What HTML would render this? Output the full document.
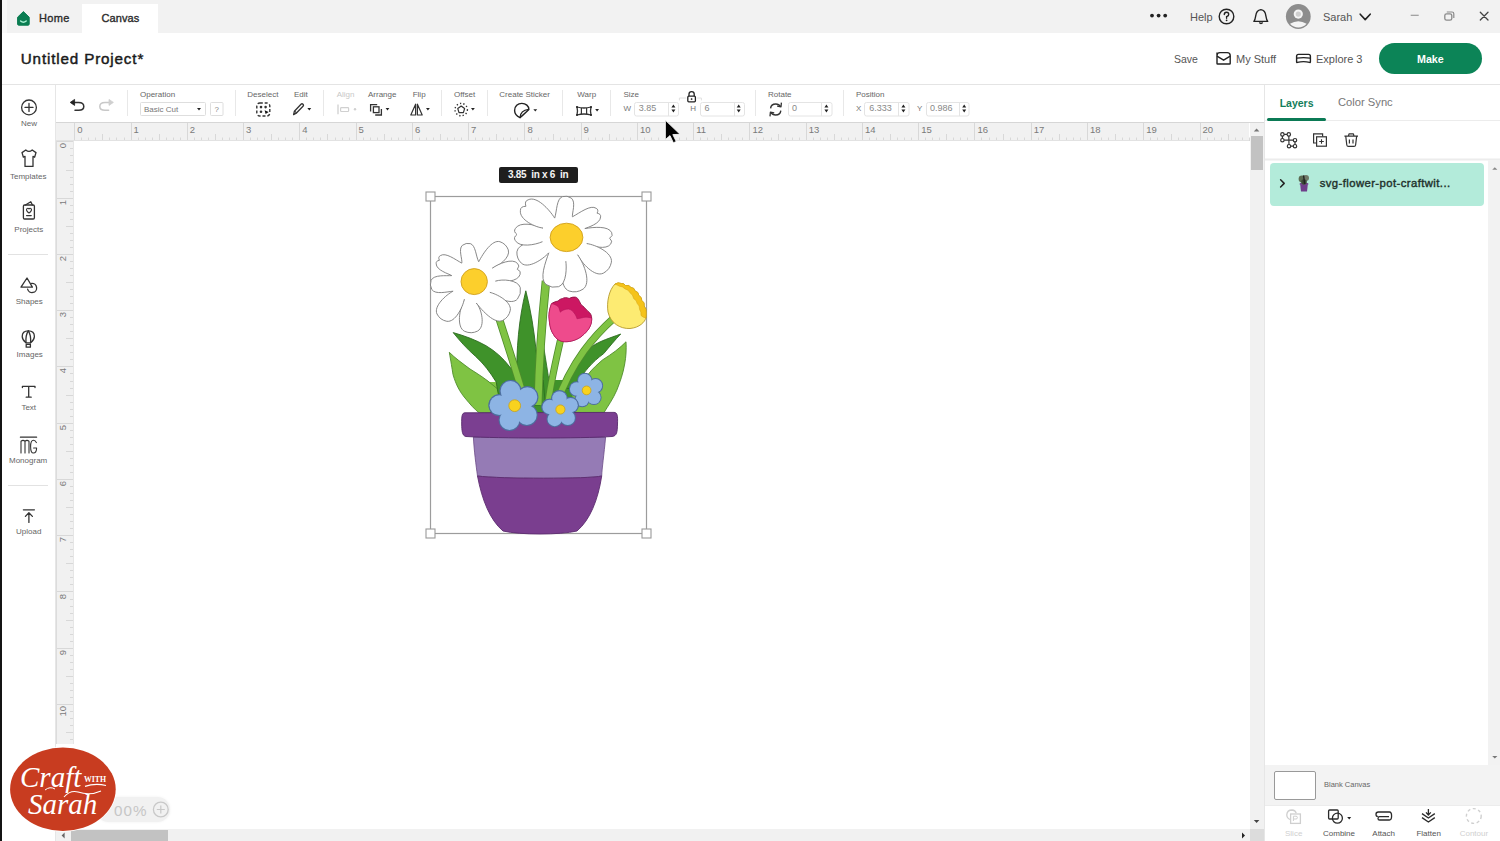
<!DOCTYPE html>
<html><head><meta charset="utf-8">
<style>
html,body{margin:0;padding:0}
body{width:1500px;height:841px;overflow:hidden;position:relative;background:#fff;font-family:"Liberation Sans",sans-serif;color:#333}
.a{position:absolute}
.t{position:absolute;white-space:nowrap;line-height:1}
.lbl{position:absolute;white-space:nowrap;line-height:1;font-size:8px;color:#666}
svg{position:absolute;overflow:visible}
</style></head><body>
<!-- top bar -->
<div class="a" style="left:0;top:0;width:1500px;height:33px;background:#f2f2f2"></div>
<div class="a" style="left:82px;top:4px;width:76px;height:29px;background:#fff"></div>
<!-- header -->
<div class="a" style="left:0;top:33px;width:1500px;height:51px;background:#fff"></div>
<div class="a" style="left:0;top:84px;width:1500px;height:1px;background:#e4e4e4"></div>
<div class="a" style="left:2px;top:0;width:5px;height:33px;background:#f9f9f9"></div>
<!-- left black edge -->
<div class="a" style="left:0;top:0;width:2px;height:841px;background:#141414"></div>

<!-- home icon -->
<svg style="left:0;top:0" width="40" height="33"><path d="M17.6 17.2 L23.4 11.6 L29.2 17.2 L29.2 24 Q29.2 25.2 28 25.2 L18.8 25.2 Q17.6 25.2 17.6 24 Z" fill="#0b7d52" stroke="#0b7d52" stroke-width="1" stroke-linejoin="round"/><path d="M20.6 21 Q23.4 23.4 26.2 21" fill="none" stroke="#a8f0d2" stroke-width="1.5" stroke-linecap="round"/></svg>
<div class="t" style="left:39px;top:13px;font-size:11px;letter-spacing:0.35px;-webkit-text-stroke:0.35px #2b2b2b;color:#2b2b2b">Home</div>
<div class="t" style="left:101.5px;top:13px;font-size:11px;letter-spacing:0.1px;-webkit-text-stroke:0.35px #2b2b2b;color:#2b2b2b">Canvas</div>
<div class="t" style="left:20.8px;top:51.3px;font-size:15.2px;letter-spacing:0.85px;-webkit-text-stroke:0.45px #1a1a1a;color:#1a1a1a">Untitled Project*</div>

<!-- top right -->
<svg style="left:1140px;top:0" width="360" height="33">
 <circle cx="12" cy="15.6" r="1.9" fill="#222"/><circle cx="18.6" cy="15.6" r="1.9" fill="#222"/><circle cx="25.2" cy="15.6" r="1.9" fill="#222"/>
 <circle cx="86.5" cy="16.5" r="7.3" fill="none" stroke="#222" stroke-width="1.4"/>
 <path d="M84.3 14.6 Q84.3 12.3 86.5 12.3 Q88.7 12.3 88.7 14.4 Q88.7 15.8 86.6 16.6 L86.6 18.2" fill="none" stroke="#222" stroke-width="1.4" stroke-linecap="round"/>
 <circle cx="86.6" cy="20.3" r="0.9" fill="#222"/>
 <path d="M121 9.6 Q125.5 10.2 126 16 Q126.6 20 127.8 21.4 L114 21.4 Q115.2 20 115.8 16 Q116.4 10.2 121 9.6 Z" fill="none" stroke="#222" stroke-width="1.4" stroke-linejoin="round" transform="translate(-0.1,0)"/>
 <path d="M119.3 22.6 Q121 24.4 122.7 22.6" fill="none" stroke="#222" stroke-width="1.4"/>
 <circle cx="158.3" cy="16.5" r="12.4" fill="#8d8d8d"/>
 <circle cx="158.3" cy="14.1" r="4.6" fill="#f4f4f4"/>
 <circle cx="158.3" cy="14.1" r="2.6" fill="#cfcfcf"/>
 <path d="M150 23.8 Q158.3 18.8 166.6 23.8 Q163 27.6 158.3 27.6 Q153.6 27.6 150 23.8 Z" fill="#f4f4f4"/>
 <path d="M220.2 14.2 L225.2 19.6 L230.2 14.2" fill="none" stroke="#222" stroke-width="1.6" stroke-linejoin="round" stroke-linecap="round"/>
 <path d="M270.7 15.3 L278.7 15.3" stroke="#9a9a9a" stroke-width="1.2"/>
 <rect x="304.8" y="13.8" width="7" height="6.4" rx="1.8" fill="none" stroke="#8a8a8a" stroke-width="1.3"/>
 <path d="M306.8 12 L312 12 Q313.8 12 313.8 13.8 L313.8 18" fill="none" stroke="#8a8a8a" stroke-width="1.2"/>
 <path d="M340.3 12.3 L348 20 M348 12.3 L340.3 20" stroke="#444" stroke-width="1.3" stroke-linecap="round"/>
</svg>
<div class="t" style="left:1190px;top:12px;font-size:11px;color:#555">Help</div>
<div class="t" style="left:1323px;top:12px;font-size:11px;color:#555">Sarah</div>

<!-- header right -->
<div class="t" style="left:1174px;top:54px;font-size:10.5px;color:#555">Save</div>
<svg style="left:1210px;top:45px" width="110" height="27">
 <path d="M7 7.6 L7 18.4 Q7 19 7.6 19 L19.6 19 Q20.2 19 20.2 18.4 L20.2 10.6 Q20.2 7.6 17.2 7.6 L10 7.6 Q7 7.6 7 10.6" fill="none" stroke="#222" stroke-width="1.4"/>
 <path d="M7 11.2 L13.6 15.2 L20.2 11.2" fill="none" stroke="#222" stroke-width="1.4" stroke-linejoin="round"/>
 <path d="M86.6 11.2 Q86.6 9.4 88.4 9.4 L98.6 9.4 Q100.4 9.4 100.4 11.2 L100.4 16.8 Q100.4 17.6 99.6 17.4 Q93.5 15.8 87.4 17.4 Q86.6 17.6 86.6 16.8 Z" fill="none" stroke="#222" stroke-width="1.4" stroke-linejoin="round"/>
 <path d="M86.8 13.2 Q93.5 12 100.2 13.2" fill="none" stroke="#222" stroke-width="1.2"/>
</svg>
<div class="t" style="left:1236px;top:54px;font-size:11px;color:#555">My Stuff</div>
<div class="t" style="left:1316px;top:54px;font-size:11px;color:#555">Explore 3</div>
<div class="a" style="left:1379px;top:43px;width:103px;height:31px;border-radius:16px;background:#0c8457"></div>
<div class="t" style="left:1417px;top:54px;font-size:10.7px;font-weight:bold;color:#fff">Make</div>

<!-- toolbar labels -->
<div class="lbl" style="left:140px;top:90.8px">Operation</div>
<div class="lbl" style="left:247.3px;top:90.8px">Deselect</div>
<div class="lbl" style="left:294px;top:90.8px">Edit</div>
<div class="lbl" style="left:336.7px;top:90.8px;color:#c8c8c8">Align</div>
<div class="lbl" style="left:368px;top:90.8px">Arrange</div>
<div class="lbl" style="left:412.7px;top:90.8px">Flip</div>
<div class="lbl" style="left:454px;top:90.8px">Offset</div>
<div class="lbl" style="left:499.3px;top:90.8px">Create Sticker</div>
<div class="lbl" style="left:577.3px;top:90.8px">Warp</div>
<div class="lbl" style="left:623.5px;top:90.8px">Size</div>
<div class="lbl" style="left:768px;top:90.8px">Rotate</div>
<div class="lbl" style="left:856px;top:90.8px">Position</div>

<svg style="left:0;top:85px" width="1000" height="37">
 <g stroke="#e8e8e8" stroke-width="1">
  <path d="M127.5 5V31M235.5 5V31M323.5 5V31M441.5 5V31M487.5 5V31M562.5 5V31M610.5 5V31M755.5 5V31M843.5 5V31"/>
 </g>
 <!-- undo -->
 <path d="M74 17.4 L78.6 17.4 Q83.8 17.4 83.8 21.4 Q83.8 25.2 78.6 25.2 L75 25.2" fill="none" stroke="#333" stroke-width="1.5" stroke-linecap="round"/>
 <path d="M70.2 17.4 L74.6 14.4 L74.6 20.4 Z" fill="#222" stroke="#222" stroke-width="0.8" stroke-linejoin="round"/>
 <!-- redo grey -->
 <path d="M109.6 17.4 L105 17.4 Q99.8 17.4 99.8 21.4 Q99.8 25.2 105 25.2 L108.6 25.2" fill="none" stroke="#c8c8c8" stroke-width="1.5" stroke-linecap="round"/>
 <path d="M113.4 17.4 L109 14.4 L109 20.4 Z" fill="#cfcfcf" stroke="#cfcfcf" stroke-width="0.8" stroke-linejoin="round"/>
 <!-- operation dropdown -->
 <rect x="140.5" y="17.5" width="65" height="13" rx="1" fill="#fff" stroke="#dedede"/>
 <path d="M197 23 L201 23 L199 25.4 Z" fill="#222"/>
 <rect x="210.5" y="17.5" width="12.5" height="13" rx="1" fill="#fff" stroke="#dedede"/>
 <!-- deselect -->
 <rect x="256.8" y="18" width="13" height="13" rx="3" fill="none" stroke="#333" stroke-width="1.4" stroke-dasharray="3 1.9"/>
 <circle cx="261" cy="22.1" r="1.3" fill="#333"/><circle cx="265.6" cy="22.1" r="1.3" fill="#333"/><circle cx="261" cy="26.8" r="1.3" fill="#333"/>
 <path d="M264.6 25.2 L268.6 27 L265.6 29 Z" fill="#111"/>
 <!-- edit pencil -->
 <path d="M293.6 29.6 L294.4 26.2 L301 19.2 Q302 18.2 303 19.2 Q304 20.2 303 21.2 L296.2 28.2 Z" fill="none" stroke="#333" stroke-width="1.3" stroke-linejoin="round"/>
 <path d="M294.6 26.2 L296.6 28" stroke="#333" stroke-width="1.1"/>
 <path d="M307.4 23 L311.2 23 L309.3 25.4 Z" fill="#222"/>
 <!-- align grey -->
 <path d="M338 19.4V29.3" stroke="#d0d0d0" stroke-width="1.3"/>
 <rect x="340.6" y="22.7" width="8" height="3.8" rx="0.8" fill="none" stroke="#d0d0d0" stroke-width="1.2"/>
 <circle cx="355" cy="24.2" r="1.2" fill="#d0d0d0"/>
 <!-- arrange -->
 <path d="M370.6 26.4 L370.6 19.6 L377.2 19.6" fill="none" stroke="#333" stroke-width="1.3"/>
 <rect x="373.4" y="21.8" width="5.6" height="5.8" fill="none" stroke="#333" stroke-width="1.3"/>
 <path d="M381.4 24 L381.4 30 L375.2 30" fill="none" stroke="#333" stroke-width="1.3"/>
 <path d="M385.6 23 L389.4 23 L387.5 25.4 Z" fill="#222"/>
 <!-- flip -->
 <path d="M415.6 19.2 L410.8 30 L415.6 30 Z M417.4 19.2 L422.2 30 L417.4 30 Z" fill="none" stroke="#333" stroke-width="1.2" stroke-linejoin="round"/>
 <path d="M426 23 L429.8 23 L427.9 25.4 Z" fill="#222"/>
 <!-- offset -->
 <circle cx="461.2" cy="24.6" r="6.2" fill="none" stroke="#333" stroke-width="1.4" stroke-dasharray="1.3 2.1"/>
 <path d="M461.2 21 L464.6 23.6 L463.4 27.6 L459 27.6 L457.8 23.6 Z" fill="none" stroke="#333" stroke-width="1.2" stroke-linejoin="round"/>
 <path d="M471 23 L474.8 23 L472.9 25.4 Z" fill="#222"/>
 <!-- sticker -->
 <path d="M520 32.7 C516 30.5 514.6 28 514.6 25.4 C514.6 21.3 517.8 18.4 521.8 18.4 C525.8 18.4 528.9 21 528.9 24.6 C526 27.5 523 30 520 32.7 Z" fill="none" stroke="#222" stroke-width="1.4" stroke-linejoin="round"/>
 <path d="M520 32.7 C520.3 28.4 522.6 25 528.6 24.4" fill="none" stroke="#222" stroke-width="1.3"/>
 <path d="M533.4 24.2 L537.2 24.2 L535.3 26.6 Z" fill="#222"/>
 <!-- warp -->
 <path d="M577 22 Q584 24 591 22 Q590 26 591 30 Q584 28 577 30 Q578 26 577 22 Z" fill="none" stroke="#333" stroke-width="1.3" stroke-linejoin="round"/>
 <path d="M581.4 23V29M586.6 23V29" stroke="#333" stroke-width="1.2"/>
 <circle cx="577" cy="22" r="1" fill="#222"/><circle cx="591" cy="22" r="1" fill="#222"/><circle cx="577" cy="30" r="1" fill="#222"/><circle cx="591" cy="30" r="1" fill="#222"/>
 <path d="M595.2 24 L599 24 L597.1 26.4 Z" fill="#222"/>
 <!-- size W -->
 <rect x="634.5" y="17.5" width="44" height="13.5" rx="2" fill="#fff" stroke="#e4e4e4"/>
 <path d="M668.5 18V31" stroke="#e4e4e4"/>
 <path d="M671.4 22.4 L673.4 19.6 L675.4 22.4 Z M671.4 24.6 L673.4 27.4 L675.4 24.6 Z" fill="#222"/>
 <!-- lock -->
 <path d="M679.4 15.4 L679.4 13 L686.2 13 M697.2 13 L701.4 13 L701.4 15.4" fill="none" stroke="#e0e0e0" stroke-width="1"/>
 <path d="M689 11.2 L689 9 Q689 6.6 691.6 6.6 Q694.2 6.6 694.2 9 L694.2 11.2" fill="none" stroke="#222" stroke-width="1.3"/>
 <rect x="687.8" y="11.2" width="7.6" height="5.6" rx="1" fill="#fff" stroke="#222" stroke-width="1.3"/>
 <path d="M691.6 13.2V15M690.7 14.1H692.5" stroke="#222" stroke-width="0.8"/>
 <!-- H -->
 <rect x="700.5" y="17.5" width="44" height="13.5" rx="2" fill="#fff" stroke="#e4e4e4"/>
 <path d="M734.5 18V31" stroke="#e4e4e4"/>
 <path d="M736.7 22.4 L738.7 19.6 L740.7 22.4 Z M736.7 24.6 L738.7 27.4 L740.7 24.6 Z" fill="#222"/>
 <!-- rotate -->
 <path d="M780.6 21.6 Q779 19 775.8 19 Q771 19 770.6 23.4" fill="none" stroke="#333" stroke-width="1.4"/>
 <path d="M781.4 17.6 L781 21.8 L777.2 21" fill="none" stroke="#333" stroke-width="1.3" stroke-linejoin="round"/>
 <path d="M770.8 27.4 Q772.4 30 775.6 30 Q780.4 30 780.8 25.6" fill="none" stroke="#333" stroke-width="1.4"/>
 <path d="M770 31.4 L770.4 27.2 L774.2 28" fill="none" stroke="#333" stroke-width="1.3" stroke-linejoin="round"/>
 <rect x="788.5" y="17.5" width="43.5" height="13.5" rx="2" fill="#fff" stroke="#e4e4e4"/>
 <path d="M821.5 18V31" stroke="#e4e4e4"/>
 <path d="M824.4 22.4 L826.4 19.6 L828.4 22.4 Z M824.4 24.6 L826.4 27.4 L828.4 24.6 Z" fill="#222"/>
 <!-- X Y -->
 <rect x="864.5" y="17.5" width="44.5" height="13.5" rx="2" fill="#fff" stroke="#e4e4e4"/>
 <path d="M898.5 18V31" stroke="#e4e4e4"/>
 <path d="M901.4 22.4 L903.4 19.6 L905.4 22.4 Z M901.4 24.6 L903.4 27.4 L905.4 24.6 Z" fill="#222"/>
 <rect x="926.5" y="17.5" width="42.5" height="13.5" rx="2" fill="#fff" stroke="#e4e4e4"/>
 <path d="M959.5 18V31" stroke="#e4e4e4"/>
 <path d="M962.2 22.4 L964.2 19.6 L966.2 22.4 Z M962.2 24.6 L964.2 27.4 L966.2 24.6 Z" fill="#222"/>
</svg>
<div class="t" style="left:144px;top:106px;font-size:8px;color:#777">Basic Cut</div>
<div class="t" style="left:214.5px;top:106px;font-size:8px;color:#888">?</div>
<div class="t" style="left:623.4px;top:105.2px;font-size:8px;color:#777">W</div>
<div class="t" style="left:638.8px;top:104.3px;font-size:9px;color:#888">3.85</div>
<div class="t" style="left:690.2px;top:105.2px;font-size:8px;color:#777">H</div>
<div class="t" style="left:704.6px;top:104.3px;font-size:9px;color:#888">6</div>
<div class="t" style="left:792px;top:104.3px;font-size:9px;color:#888">0</div>
<div class="t" style="left:856px;top:105.2px;font-size:8px;color:#777">X</div>
<div class="t" style="left:869.3px;top:104.3px;font-size:9px;color:#888">6.333</div>
<div class="t" style="left:917px;top:105.2px;font-size:8px;color:#777">Y</div>
<div class="t" style="left:930px;top:104.3px;font-size:9px;color:#888">0.986</div>

<div class="a" style="left:56px;top:122px;width:1193px;height:19px;background:#f1f1f1"></div>
<div class="a" style="left:56px;top:122px;width:1209px;height:1px;background:#d6d6d6"></div>
<svg style="left:0;top:0" width="1250" height="145"><path d="M74.5 123V141 M81.5 137.5V141 M88.5 137.5V141 M95.5 137.5V141 M102.5 134V141 M109.5 137.5V141 M116.5 137.5V141 M124.5 137.5V141 M131.5 123V141 M138.5 137.5V141 M145.5 137.5V141 M152.5 137.5V141 M159.5 134V141 M166.5 137.5V141 M173.5 137.5V141 M180.5 137.5V141 M187.5 123V141 M194.5 137.5V141 M201.5 137.5V141 M208.5 137.5V141 M215.5 134V141 M222.5 137.5V141 M229.5 137.5V141 M236.5 137.5V141 M243.5 123V141 M250.5 137.5V141 M257.5 137.5V141 M264.5 137.5V141 M271.5 134V141 M278.5 137.5V141 M285.5 137.5V141 M292.5 137.5V141 M299.5 123V141 M306.5 137.5V141 M313.5 137.5V141 M320.5 137.5V141 M327.5 134V141 M335.5 137.5V141 M342.5 137.5V141 M349.5 137.5V141 M356.5 123V141 M363.5 137.5V141 M370.5 137.5V141 M377.5 137.5V141 M384.5 134V141 M391.5 137.5V141 M398.5 137.5V141 M405.5 137.5V141 M412.5 123V141 M419.5 137.5V141 M426.5 137.5V141 M433.5 137.5V141 M440.5 134V141 M447.5 137.5V141 M454.5 137.5V141 M461.5 137.5V141 M468.5 123V141 M475.5 137.5V141 M482.5 137.5V141 M489.5 137.5V141 M496.5 134V141 M503.5 137.5V141 M510.5 137.5V141 M517.5 137.5V141 M524.5 123V141 M531.5 137.5V141 M538.5 137.5V141 M545.5 137.5V141 M553.5 134V141 M560.5 137.5V141 M567.5 137.5V141 M574.5 137.5V141 M581.5 123V141 M588.5 137.5V141 M595.5 137.5V141 M602.5 137.5V141 M609.5 134V141 M616.5 137.5V141 M623.5 137.5V141 M630.5 137.5V141 M637.5 123V141 M644.5 137.5V141 M651.5 137.5V141 M658.5 137.5V141 M665.5 134V141 M672.5 137.5V141 M679.5 137.5V141 M686.5 137.5V141 M693.5 123V141 M700.5 137.5V141 M707.5 137.5V141 M714.5 137.5V141 M721.5 134V141 M728.5 137.5V141 M735.5 137.5V141 M742.5 137.5V141 M749.5 123V141 M756.5 137.5V141 M763.5 137.5V141 M771.5 137.5V141 M778.5 134V141 M785.5 137.5V141 M792.5 137.5V141 M799.5 137.5V141 M806.5 123V141 M813.5 137.5V141 M820.5 137.5V141 M827.5 137.5V141 M834.5 134V141 M841.5 137.5V141 M848.5 137.5V141 M855.5 137.5V141 M862.5 123V141 M869.5 137.5V141 M876.5 137.5V141 M883.5 137.5V141 M890.5 134V141 M897.5 137.5V141 M904.5 137.5V141 M911.5 137.5V141 M918.5 123V141 M925.5 137.5V141 M932.5 137.5V141 M939.5 137.5V141 M946.5 134V141 M953.5 137.5V141 M960.5 137.5V141 M967.5 137.5V141 M974.5 123V141 M981.5 137.5V141 M989.5 137.5V141 M996.5 137.5V141 M1003.5 134V141 M1010.5 137.5V141 M1017.5 137.5V141 M1024.5 137.5V141 M1031.5 123V141 M1038.5 137.5V141 M1045.5 137.5V141 M1052.5 137.5V141 M1059.5 134V141 M1066.5 137.5V141 M1073.5 137.5V141 M1080.5 137.5V141 M1087.5 123V141 M1094.5 137.5V141 M1101.5 137.5V141 M1108.5 137.5V141 M1115.5 134V141 M1122.5 137.5V141 M1129.5 137.5V141 M1136.5 137.5V141 M1143.5 123V141 M1150.5 137.5V141 M1157.5 137.5V141 M1164.5 137.5V141 M1171.5 134V141 M1178.5 137.5V141 M1185.5 137.5V141 M1192.5 137.5V141 M1200.5 123V141 M1207.5 137.5V141 M1214.5 137.5V141 M1221.5 137.5V141 M1228.5 134V141 M1235.5 137.5V141 M1242.5 137.5V141 M1249.5 137.5V141" stroke="#d8d8d8" stroke-width="1" fill="none"/><path d="M56 140.5H1249" stroke="#e2e2e2" stroke-width="1"/></svg>
<div class="t" style="left:77.3px;top:125px;font-size:9.5px;color:#7a7a7a">0</div>
<div class="t" style="left:133.6px;top:125px;font-size:9.5px;color:#7a7a7a">1</div>
<div class="t" style="left:189.8px;top:125px;font-size:9.5px;color:#7a7a7a">2</div>
<div class="t" style="left:246.1px;top:125px;font-size:9.5px;color:#7a7a7a">3</div>
<div class="t" style="left:302.3px;top:125px;font-size:9.5px;color:#7a7a7a">4</div>
<div class="t" style="left:358.6px;top:125px;font-size:9.5px;color:#7a7a7a">5</div>
<div class="t" style="left:414.9px;top:125px;font-size:9.5px;color:#7a7a7a">6</div>
<div class="t" style="left:471.1px;top:125px;font-size:9.5px;color:#7a7a7a">7</div>
<div class="t" style="left:527.4px;top:125px;font-size:9.5px;color:#7a7a7a">8</div>
<div class="t" style="left:583.6px;top:125px;font-size:9.5px;color:#7a7a7a">9</div>
<div class="t" style="left:639.9px;top:125px;font-size:9.5px;color:#7a7a7a">10</div>
<div class="t" style="left:696.2px;top:125px;font-size:9.5px;color:#7a7a7a">11</div>
<div class="t" style="left:752.4px;top:125px;font-size:9.5px;color:#7a7a7a">12</div>
<div class="t" style="left:808.7px;top:125px;font-size:9.5px;color:#7a7a7a">13</div>
<div class="t" style="left:864.9px;top:125px;font-size:9.5px;color:#7a7a7a">14</div>
<div class="t" style="left:921.2px;top:125px;font-size:9.5px;color:#7a7a7a">15</div>
<div class="t" style="left:977.5px;top:125px;font-size:9.5px;color:#7a7a7a">16</div>
<div class="t" style="left:1033.7px;top:125px;font-size:9.5px;color:#7a7a7a">17</div>
<div class="t" style="left:1090.0px;top:125px;font-size:9.5px;color:#7a7a7a">18</div>
<div class="t" style="left:1146.2px;top:125px;font-size:9.5px;color:#7a7a7a">19</div>
<div class="t" style="left:1202.5px;top:125px;font-size:9.5px;color:#7a7a7a">20</div>
<div class="a" style="left:56px;top:141px;width:18px;height:603px;background:#f1f1f1"></div>
<svg style="left:0;top:0" width="80" height="745"><path d="M56 141.5H74 M70 148.5H74 M70 155.5H74 M70 162.5H74 M66 170.5H74 M70 177.5H74 M70 184.5H74 M70 191.5H74 M56 198.5H74 M70 205.5H74 M70 212.5H74 M70 219.5H74 M66 226.5H74 M70 233.5H74 M70 240.5H74 M70 247.5H74 M56 254.5H74 M70 261.5H74 M70 268.5H74 M70 275.5H74 M66 282.5H74 M70 289.5H74 M70 296.5H74 M70 303.5H74 M56 310.5H74 M70 317.5H74 M70 324.5H74 M70 331.5H74 M66 338.5H74 M70 345.5H74 M70 352.5H74 M70 359.5H74 M56 366.5H74 M70 373.5H74 M70 381.5H74 M70 388.5H74 M66 395.5H74 M70 402.5H74 M70 409.5H74 M70 416.5H74 M56 423.5H74 M70 430.5H74 M70 437.5H74 M70 444.5H74 M66 451.5H74 M70 458.5H74 M70 465.5H74 M70 472.5H74 M56 479.5H74 M70 486.5H74 M70 493.5H74 M70 500.5H74 M66 507.5H74 M70 514.5H74 M70 521.5H74 M70 528.5H74 M56 535.5H74 M70 542.5H74 M70 549.5H74 M70 556.5H74 M66 563.5H74 M70 570.5H74 M70 577.5H74 M70 584.5H74 M56 591.5H74 M70 599.5H74 M70 606.5H74 M70 613.5H74 M66 620.5H74 M70 627.5H74 M70 634.5H74 M70 641.5H74 M56 648.5H74 M70 655.5H74 M70 662.5H74 M70 669.5H74 M66 676.5H74 M70 683.5H74 M70 690.5H74 M70 697.5H74 M56 704.5H74 M70 711.5H74 M70 718.5H74 M70 725.5H74 M66 732.5H74 M70 739.5H74" stroke="#d8d8d8" stroke-width="1" fill="none"/><path d="M56.5 141V744" stroke="#dcdcdc" stroke-width="1"/><path d="M73.5 141V744" stroke="#e6e6e6" stroke-width="1"/></svg>
<div class="t" style="left:57.5px;top:143.4px;font-size:9.5px;color:#7a7a7a;transform-origin:0 0;transform:translate(0px,5.3px) rotate(-90deg)">0</div>
<div class="t" style="left:57.5px;top:199.7px;font-size:9.5px;color:#7a7a7a;transform-origin:0 0;transform:translate(0px,5.3px) rotate(-90deg)">1</div>
<div class="t" style="left:57.5px;top:255.9px;font-size:9.5px;color:#7a7a7a;transform-origin:0 0;transform:translate(0px,5.3px) rotate(-90deg)">2</div>
<div class="t" style="left:57.5px;top:312.2px;font-size:9.5px;color:#7a7a7a;transform-origin:0 0;transform:translate(0px,5.3px) rotate(-90deg)">3</div>
<div class="t" style="left:57.5px;top:368.4px;font-size:9.5px;color:#7a7a7a;transform-origin:0 0;transform:translate(0px,5.3px) rotate(-90deg)">4</div>
<div class="t" style="left:57.5px;top:424.7px;font-size:9.5px;color:#7a7a7a;transform-origin:0 0;transform:translate(0px,5.3px) rotate(-90deg)">5</div>
<div class="t" style="left:57.5px;top:481.0px;font-size:9.5px;color:#7a7a7a;transform-origin:0 0;transform:translate(0px,5.3px) rotate(-90deg)">6</div>
<div class="t" style="left:57.5px;top:537.2px;font-size:9.5px;color:#7a7a7a;transform-origin:0 0;transform:translate(0px,5.3px) rotate(-90deg)">7</div>
<div class="t" style="left:57.5px;top:593.5px;font-size:9.5px;color:#7a7a7a;transform-origin:0 0;transform:translate(0px,5.3px) rotate(-90deg)">8</div>
<div class="t" style="left:57.5px;top:649.7px;font-size:9.5px;color:#7a7a7a;transform-origin:0 0;transform:translate(0px,5.3px) rotate(-90deg)">9</div>
<div class="t" style="left:57.5px;top:706.0px;font-size:9.5px;color:#7a7a7a;transform-origin:0 0;transform:translate(0px,10.6px) rotate(-90deg)">10</div>
<!-- sidebar -->
<div class="a" style="left:55px;top:85px;width:1px;height:756px;background:#e6e6e6"></div>
<svg style="left:0;top:85px" width="56" height="460">
 <g fill="none" stroke="#333" stroke-width="1.3" stroke-linejoin="round" stroke-linecap="round">
  <!-- new -->
  <circle cx="29" cy="22.4" r="7.4"/>
  <path d="M29 18.4V26.4M25 22.4H33"/>
  <!-- templates shirt -->
  <path d="M25.8 65 L22 67.6 L23.4 72.2 L25 71.4 L25 81.4 L33 81.4 L33 71.4 L34.6 72.2 L36 67.6 L32.2 65 Q29 67.8 25.8 65 Z"/>
  <!-- projects -->
  <rect x="23.4" y="120" width="11" height="14" rx="1.2"/>
  <path d="M25.4 120 L30.8 116.8 L32.4 120"/>
  <path d="M26.6 130.6H31.2"/>
  <path d="M29 128 Q25.6 125.6 26.8 123.8 Q28 122.6 29 124 Q30 122.6 31.2 123.8 Q32.4 125.6 29 128 Z" stroke-width="1.1"/>
  <!-- shapes -->
  <path d="M27 193 L21 202.2 L32.4 202.2 Z"/>
  <path d="M27.6 204.2 A4.6 4.6 0 1 0 31.6 198.4"/>
  <!-- images balloon -->
  <path d="M28.3 245.8 Q34.4 245.8 34.4 251.4 Q34.4 254.6 30.6 257.8 L26 257.8 Q22.2 254.6 22.2 251.4 Q22.2 245.8 28.3 245.8 Z"/>
  <path d="M28.3 245.8 Q25.4 250 26 257.8 M28.3 245.8 Q31.2 250 30.6 257.8"/>
  <path d="M26.2 259.4 H30.4 V262.2 H26.2 Z"/>
  <!-- text T -->
  <path d="M22.4 302.6 V301.4 H35 V302.6 M28.7 301.4 V312.2 M26.2 312.2 H31.2"/>
  <!-- monogram -->
  <path d="M20.4 352.2 H36.6" stroke-width="1.2"/>
  <path d="M21 368 V356.2 Q23 354.6 25 356.2 V368 M25 356.2 Q27 354.6 29 356.2 V368" stroke-width="1.1"/>
  <path d="M36.4 357.6 Q35.4 355.2 33.4 355.2 Q30.6 355.2 30.6 361.4 Q30.6 368 33.4 368 Q36.6 368 36.6 363 H33.6" stroke-width="1.1"/>
  <!-- upload -->
  <path d="M23.4 424.8 H34.4 M28.9 437.4 V428 M25.4 431.4 L28.9 427.8 L32.4 431.4"/>
 </g>
 <path d="M8 169.5H48M8 400.5H48" stroke="#e2e2e2" stroke-width="1"/>
</svg>
<div class="t" style="left:21px;top:120.3px;font-size:8px;color:#666">New</div>
<div class="t" style="left:10px;top:172.6px;font-size:8px;color:#666">Templates</div>
<div class="t" style="left:14.3px;top:225.6px;font-size:8px;color:#666">Projects</div>
<div class="t" style="left:15.7px;top:297.6px;font-size:8px;color:#666">Shapes</div>
<div class="t" style="left:16.6px;top:351px;font-size:8px;color:#666">Images</div>
<div class="t" style="left:21.4px;top:403.8px;font-size:8px;color:#666">Text</div>
<div class="t" style="left:9px;top:457.4px;font-size:8px;color:#666">Monogram</div>
<div class="t" style="left:16px;top:528.3px;font-size:8px;color:#666">Upload</div>

<!-- canvas scrollbars -->
<div class="a" style="left:1250px;top:123px;width:14px;height:718px;background:#f1f1f1"></div>
<div class="a" style="left:1251px;top:136px;width:12px;height:34px;background:#c2c2c2"></div>
<svg style="left:1240px;top:120px" width="30" height="721">
 <path d="M1253.8 131.6 L1256.6 128.6 L1259.4 131.6 Z" fill="#777" transform="translate(-1240,-120)"/>
 <path d="M1253.8 820 L1256.6 823 L1259.4 820 Z" fill="#444" transform="translate(-1240,-120)"/>
</svg>
<div class="a" style="left:56px;top:829px;width:1194px;height:12px;background:#f1f1f1"></div>
<div class="a" style="left:70.7px;top:830px;width:97px;height:11px;background:#c2c2c2"></div>
<div class="a" style="left:1250px;top:829px;width:14px;height:12px;background:#dcdcdc"></div>
<svg style="left:0;top:820px" width="1260" height="21">
 <path d="M64.6 12.4 L61.6 15.4 L64.6 18.4 Z" fill="#666"/>
 <path d="M1242 12.4 L1245 15.4 L1242 18.4 Z" fill="#222"/>
</svg>

<!-- right panel -->
<div class="a" style="left:1264px;top:85px;width:1px;height:756px;background:#e6e6e6"></div>
<div class="a" style="left:1265px;top:120px;width:235px;height:1px;background:#ececec"></div>
<div class="a" style="left:1267px;top:118px;width:59px;height:3px;background:#0b7a55;border-radius:1.5px"></div>
<div class="t" style="left:1279.7px;top:97.8px;font-size:10.5px;font-weight:bold;color:#137d5a">Layers</div>
<div class="t" style="left:1338px;top:97px;font-size:11.2px;color:#777">Color Sync</div>
<svg style="left:1265px;top:121px" width="235" height="720">
 <g transform="translate(-1265,-121)" fill="none" stroke="#333" stroke-width="1.2">
  <path d="M1282.4 134.4 L1288.8 134.4 M1282.4 134.4 L1282.4 140.2 L1289 140.2 M1288.8 134.4 L1289 146.2 L1295 146.2 L1295 140.2 L1289 140.2"/>
  <circle cx="1282.4" cy="134.4" r="1.7" fill="#fff"/><circle cx="1288.8" cy="134.4" r="1.7" fill="#fff"/><circle cx="1282.4" cy="140.2" r="1.7" fill="#fff"/>
  <circle cx="1295" cy="140.2" r="1.7" fill="#fff"/><circle cx="1289" cy="146.2" r="1.7" fill="#fff"/><circle cx="1295" cy="146.2" r="1.7" fill="#fff"/>
  <path d="M1316.4 143 L1313.6 143 L1313.6 133.8 L1322.6 133.8 L1322.6 136.6"/>
  <rect x="1316.6" y="136.8" width="9.8" height="9.4"/>
  <path d="M1321.5 139.2V143.8M1319.2 141.5H1323.8" stroke-width="1.1"/>
  <path d="M1344.4 136.2 L1358 136.2 M1348.4 136.2 L1349 133.8 L1353.4 133.8 L1354 136.2 M1345.8 136.6 L1346.8 145 Q1347 146.4 1348.4 146.4 L1354 146.4 Q1355.4 146.4 1355.6 145 L1356.6 136.6 M1349.4 139.4V143.6M1353 139.4V143.6" stroke-linejoin="round"/>
 </g>
 <path d="M0 38.5H235" stroke="#ececec" stroke-width="2"/>
</svg>
<div class="a" style="left:1488px;top:160px;width:12px;height:606px;background:#f2f2f2"></div>
<svg style="left:1480px;top:160px" width="20" height="606">
 <path d="M4.2 9.8 L6.8 7.2 L9.4 9.8" transform="translate(8,0)" fill="#888"/>
 <path d="M4.2 96 L6.8 98.6 L9.4 96" transform="translate(8,500)" fill="#777"/>
</svg>
<div class="a" style="left:1270px;top:163px;width:214px;height:43px;background:#b3ebda;border-radius:4px"></div>
<svg style="left:1270px;top:163px" width="214" height="43">
 <path d="M10.6 16.8 L14.2 20.4 L10.6 24" fill="none" stroke="#222" stroke-width="1.5" stroke-linecap="round" stroke-linejoin="round"/>
 <path d="M30 20 L38 20 L37 28.6 L31 28.6 Z" fill="#6f3e8a"/>
 <path d="M29.6 21 L38.4 21" stroke="#7b4f95" stroke-width="1.2"/>
 <circle cx="32" cy="16" r="3.4" fill="#5b6b52"/><circle cx="36" cy="15" r="3" fill="#707a68"/><circle cx="34" cy="19" r="2.8" fill="#3c4a36"/>
 <path d="M33.6 12.4 L34.6 21" stroke="#222" stroke-width="1.4"/>
</svg>
<div class="t" style="left:1319.7px;top:178.3px;font-size:11.3px;letter-spacing:0.42px;-webkit-text-stroke:0.4px #22312c;color:#22312c">svg-flower-pot-craftwit...</div>

<div class="a" style="left:1265px;top:765px;width:235px;height:40px;background:#f3f3f3"></div>
<div class="a" style="left:1274px;top:771px;width:42px;height:29px;background:#fff;border:1.3px solid #999;border-radius:2px;box-sizing:border-box"></div>
<div class="t" style="left:1324px;top:781.4px;font-size:7.5px;color:#666">Blank Canvas</div>
<div class="a" style="left:1265px;top:805px;width:235px;height:1px;background:#ececec"></div>
<svg style="left:1265px;top:805px" width="235" height="36">
 <g transform="translate(-1265,-805)" fill="none" stroke-width="1.3">
  <g stroke="#cfcfcf">
   <path d="M1290 819.5 Q1286.6 818 1286.8 814.6 Q1287.2 810 1292 810 Q1295.4 810.2 1296.2 813.2"/>
   <rect x="1290.6" y="814" width="9.8" height="9.4"/>
   <path d="M1293.4 821V816.2 H1296 Q1297.4 816.2 1297.4 817.6 Q1297.4 819 1296 819 H1293.4" stroke-width="1"/>
  </g>
  <g stroke="#2a2a2a">
   <rect x="1328.6" y="810" width="9.6" height="9" rx="1"/>
   <circle cx="1337.4" cy="818.2" r="5"/>
   <path d="M1377.8 816.4 Q1376 816.4 1376 814.2 Q1376 812 1378.4 812 L1389.4 812 Q1391.6 812 1391.6 816 Q1391.6 820 1389.4 820 L1379.6 820 Q1378 820 1378 818.4 Q1378 816.6 1379.6 816.6 L1389 816.6" stroke-width="1.3"/>
   <path d="M1428.4 809 V814.6 M1426 812.4 L1428.4 815 L1430.8 812.4 M1422 813.6 L1428.4 818 L1434.8 813.6 M1422 817.6 L1428.4 822 L1434.8 817.6" stroke-linejoin="round"/>
  </g>
  <circle cx="1473.8" cy="816" r="7.4" stroke="#d0d0d0" stroke-width="1.4" stroke-dasharray="3 2.6"/>
 </g>
 <path d="M82.2 12 L86.2 12 L84.2 14.6 Z" fill="#222"/>
</svg>
<div class="t" style="left:1285px;top:829.5px;font-size:8px;color:#cfcfcf">Slice</div>
<div class="t" style="left:1323px;top:829.5px;font-size:8px;color:#555">Combine</div>
<div class="t" style="left:1372.3px;top:829.5px;font-size:8px;color:#555">Attach</div>
<div class="t" style="left:1416.4px;top:829.5px;font-size:8px;color:#555">Flatten</div>
<div class="t" style="left:1459.7px;top:829.5px;font-size:8px;color:#cfcfcf">Contour</div>

<svg style="left:0;top:0" width="1500" height="841">
<rect x="430.5" y="196.5" width="216" height="337" fill="none" stroke="#9c9c9c" stroke-width="1.2"/>
<path d="M488 382 L600 382 L600 413 L488 413 Z" fill="#7fc343"/>
<path d="M518 380 L570 380 L575 413 L515 413 Z" fill="#3f922a"/>
<path d="M449.3 352.3 C451 362 452 368 453 374.5 C456 385 460 392 465 398 C470 404 474 409 479.4 413 L510 413 C508 400 502 392 494 386 C486 379 478 374 470 369 C462 363 455 358 449.3 352.3 Z" fill="#7fc343" stroke="#4f8c2c" stroke-width="0.9"/>
<path d="M453.2 332.6 C465 336 476 340 486 345.7 C495 351 503 358 509.5 366.6 C514 372 517 377 520 382 L500 400 C498 394 497 388 496.4 382.4 C490 372 484 364 475.4 356.2 C467 349 460 341 453.2 332.6 Z" fill="#3f922a" stroke="#2c6b1f" stroke-width="0.9"/>
<path d="M626 341.8 C626.5 349 626 357 624.7 364 C623 374 620 382 616.8 390.2 C613 399 608 406 603.7 413 L570 413 C575 400 580 385 588 374.5 C593 368 598 364 602.4 360 C612 354 620 348 626 341.8 Z" fill="#7fc343" stroke="#4f8c2c" stroke-width="0.9"/>
<path d="M620.7 334 C610 338 600 341 593.2 345.7 C584 352 577 359 572.3 366.6 C567 374 563 381 561.8 387.6 L580 390 C578 388 577.5 385 577.5 382.4 C584 372 592 362 603.7 353.6 C610 346 615 340 620.7 334 Z" fill="#3f922a" stroke="#2c6b1f" stroke-width="0.9"/>
<path d="M525.8 290.8 C519 318 516 350 517 380 L519 405 L540 405 C538 370 536 330 525.8 290.8 Z" fill="#3f922a" stroke="#2c6b1f" stroke-width="0.9"/>
<path d="M541 330 C545 355 549 380 552 400 L545 400 C543 380 541 355 541 330 Z" fill="#3f922a" stroke="#2c6b1f" stroke-width="0.8"/>
<path d="M499 318 C506 340 516 370 526 405" fill="none" stroke="#4f8c2c" stroke-width="7.6" stroke-linecap="butt"/><path d="M499 318 C506 340 516 370 526 405" fill="none" stroke="#7fc343" stroke-width="6" stroke-linecap="butt"/>
<path d="M546 281 C542 320 539 360 538 405" fill="none" stroke="#4f8c2c" stroke-width="8.6" stroke-linecap="butt"/><path d="M546 281 C542 320 539 360 538 405" fill="none" stroke="#7fc343" stroke-width="7" stroke-linecap="butt"/>
<path d="M561 338 C556 360 550 385 548 405" fill="none" stroke="#4f8c2c" stroke-width="7.1" stroke-linecap="butt"/><path d="M561 338 C556 360 550 385 548 405" fill="none" stroke="#7fc343" stroke-width="5.5" stroke-linecap="butt"/>
<path d="M614 318 C595 335 572 360 556 405" fill="none" stroke="#4f8c2c" stroke-width="7.6" stroke-linecap="butt"/><path d="M614 318 C595 335 572 360 556 405" fill="none" stroke="#7fc343" stroke-width="6" stroke-linecap="butt"/>
<path d="M572.4 216.8 C580.0 212.7 590.6 204.4 596.2 208.3 Q598.9 209.6 597.1 213.2 Q601.1 213.9 600.6 216.9 C600.4 223.8 587.5 227.4 584.8 228.6" fill="#fff" stroke="#7a7a7a" stroke-width="0.9"/>
<path d="M584.8 228.6 C593.2 227.2 608.6 225.5 611.7 232.7 Q613.6 235.7 609.6 238.2 Q613.1 241.3 610.8 243.9 C606.4 250.5 591.6 246.1 586.8 243.6" fill="#fff" stroke="#7a7a7a" stroke-width="0.9"/>
<path d="M586.8 243.6 C595.6 244.7 612.8 252.7 611.4 262.2 Q610.0 269.7 603.3 273.2 C594.6 277.4 581.9 263.4 577.6 254.8" fill="#fff" stroke="#7a7a7a" stroke-width="0.9"/>
<path d="M577.6 254.8 C584.8 264.7 591.2 283.2 583.1 289.1 Q576.6 293.4 569.1 291.0 C559.8 287.6 560.9 268.0 565.8 261.3" fill="#fff" stroke="#7a7a7a" stroke-width="0.9"/>
<path d="M565.8 261.3 C566.6 266.3 567.0 283.9 558.6 286.7 Q551.8 288.6 546.1 284.5 C539.0 279.0 545.4 262.6 548.8 252.8" fill="#fff" stroke="#7a7a7a" stroke-width="0.9"/>
<path d="M548.8 252.8 C542.5 259.7 528.1 269.0 521.5 263.3 Q516.5 258.6 516.9 251.8 C518.0 243.2 534.8 240.1 542.3 241.7" fill="#fff" stroke="#7a7a7a" stroke-width="0.9"/>
<path d="M542.3 241.7 C535.4 244.9 519.2 247.9 515.3 240.5 Q513.0 237.5 517.0 234.5 Q513.1 231.5 515.4 228.5 C519.5 221.2 535.7 224.6 543.0 228.0" fill="#fff" stroke="#7a7a7a" stroke-width="0.9"/>
<path d="M543.0 228.0 C535.8 227.5 519.1 219.8 520.4 210.5 Q520.3 206.3 525.9 206.3 Q524.2 201.0 528.2 199.8 C536.7 195.7 549.1 209.3 554.7 218.1" fill="#fff" stroke="#7a7a7a" stroke-width="0.9"/>
<path d="M554.7 218.1 C556.9 211.0 556.5 198.6 562.5 196.6 Q567.2 195.2 571.3 198.1 C576.2 201.9 571.9 213.4 572.4 216.8" fill="#fff" stroke="#7a7a7a" stroke-width="0.9"/>
<ellipse cx="566.5" cy="237.4" rx="20.4" ry="18.2" fill="#fff"/>
<ellipse cx="566.5" cy="237.4" rx="16.4" ry="14.2" fill="#fccf2c" stroke="#d09f1c" stroke-width="0.9"/>
<path d="M478.7 261.8 C483.3 253.1 492.0 239.5 499.9 241.7 Q506.1 243.8 508.3 249.9 C510.8 257.7 497.5 266.9 492.4 268.1" fill="#fff" stroke="#7a7a7a" stroke-width="0.9"/>
<path d="M492.4 268.1 C498.3 263.9 512.4 257.6 517.6 263.5 Q520.3 265.7 517.3 269.3 Q521.6 271.2 520.1 274.4 C518.0 282.0 502.6 282.4 495.5 281.2" fill="#fff" stroke="#7a7a7a" stroke-width="0.9"/>
<path d="M495.5 281.2 C502.0 278.8 518.2 279.7 520.3 287.7 Q521.5 294.1 517.4 299.1 C511.8 305.3 497.0 298.2 489.9 292.4" fill="#fff" stroke="#7a7a7a" stroke-width="0.9"/>
<path d="M489.9 292.4 C495.7 293.6 511.7 301.3 510.3 310.3 Q508.9 317.2 502.6 320.5 C494.4 324.2 482.6 311.0 476.2 303.0" fill="#fff" stroke="#7a7a7a" stroke-width="0.9"/>
<path d="M476.2 303.0 C481.6 308.6 485.7 326.3 477.7 331.0 Q471.3 334.3 464.6 331.3 C456.3 327.2 459.3 309.3 464.3 299.3" fill="#fff" stroke="#7a7a7a" stroke-width="0.9"/>
<path d="M464.3 299.3 C462.7 307.3 455.3 322.6 446.8 321.3 Q440.1 320.0 437.0 314.0 C433.4 306.2 446.0 294.8 453.1 291.2" fill="#fff" stroke="#7a7a7a" stroke-width="0.9"/>
<path d="M453.1 291.2 C447.6 291.6 435.3 295.0 431.8 289.5 Q429.3 285.1 431.1 280.3 C433.8 274.4 446.4 276.0 451.8 275.6" fill="#fff" stroke="#7a7a7a" stroke-width="0.9"/>
<path d="M451.8 275.6 C448.4 273.7 436.2 270.2 436.2 263.8 Q435.7 260.9 439.4 260.3 Q437.8 256.9 440.4 255.6 C445.7 252.0 455.6 259.9 461.8 263.1" fill="#fff" stroke="#7a7a7a" stroke-width="0.9"/>
<path d="M461.8 263.1 C462.5 259.2 458.1 249.0 462.4 245.3 Q466.0 242.6 470.3 243.6 C475.7 245.2 475.9 256.3 478.7 261.8" fill="#fff" stroke="#7a7a7a" stroke-width="0.9"/>
<ellipse cx="474.2" cy="281.6" rx="17.2" ry="17.0" fill="#fff"/>
<ellipse cx="474.2" cy="281.6" rx="13.2" ry="13.0" fill="#fccf2c" stroke="#d09f1c" stroke-width="0.9"/>
<path d="M551.5 303.7 C549 310 548.6 316 549.2 319.4 C549.6 326 551 331 553.5 334.5 C556 339 560 341.5 564.6 341.7 C571 342 578 339.5 582.2 335.8 C588 331 591.5 326 591.7 319.4 C592 315 590 312.5 587.5 310.9 C585 308 583 306 580.9 304.4 C579 300 577.5 297.5 575.7 297.2 C573 296.8 571 297.5 569.2 298.5 C566.5 297.2 564 297.5 562.6 298.5 C560.5 298.8 559 300 558 301.1 C555.5 301.5 553 302.5 551.5 303.7 Z" fill="#cc1762" stroke="#8d0f42" stroke-width="0.9"/>
<path d="M551.5 303.7 C549 310 548.6 316 549.2 319.4 C549.6 326 551 331 553.5 334.5 C556 339 560 341.5 564.6 341.7 C571 342 578 339.5 582.2 335.8 C588 331 591.5 326 591.7 319.4 L591.7 318.1 C588 317 585.5 317 583.5 317.5 C581 318 579 318.5 577 318.8 C576.5 316.5 575.5 315 575 314.2 C573 311 571 309.5 568.5 309 C565 309 562 310.5 560.3 312.2 C559.5 309.5 559 307.5 558 306.4 C556 305 554 304 551.5 303.7 Z" fill="#ee4b8c" stroke="#b3145a" stroke-width="0.6"/>
<path d="M615 284 Q618 282 621.5 283.5 Q624 283 625.5 285.5 Q629 284.5 631 287.5 Q634.5 287.5 635 291 Q638.5 291.5 638.8 295.5 Q642 297 641.8 300.5 Q645 302.5 644.2 306 Q646.8 309 646.2 313 L646 318 C644.5 322 640 327.5 630 328.5 C620 329 610.5 323 608 312 C606.5 302 609 290 615 284 Z" fill="#fdeb72" stroke="#b59a2c" stroke-width="0.9"/>
<path d="M615 284 Q618 282 621.5 283.5 Q624 283 625.5 285.5 Q629 284.5 631 287.5 Q634.5 287.5 635 291 Q638.5 291.5 638.8 295.5 Q642 297 641.8 300.5 Q645 302.5 644.2 306 Q646.8 309 646.2 313 L646 318 Q643 317.5 641 315.5 Q641.5 312 639.6 309.5 Q639.8 305.5 637.2 303.5 Q636.6 300 633.8 298.8 Q633 294.5 630 292.8 Q628.5 289.5 625.2 289 Q622.5 286.2 619.5 286.2 Q617.5 285.2 615 284 Z" fill="#f5c31a" stroke="#d3a014" stroke-width="0.5"/>
<g stroke="#4d6f9e" stroke-width="2" fill="#4d6f9e"><circle cx="586.6" cy="390.4" r="8.1"/><circle cx="584.8" cy="380.5" r="6.7"/><circle cx="595.5" cy="385.7" r="6.7"/><circle cx="593.9" cy="397.4" r="6.7"/><circle cx="582.2" cy="399.5" r="6.7"/><circle cx="576.6" cy="389.0" r="6.7"/></g>
<g fill="#8db4e4"><circle cx="586.6" cy="390.4" r="8.1"/><circle cx="584.8" cy="380.5" r="6.7"/><circle cx="595.5" cy="385.7" r="6.7"/><circle cx="593.9" cy="397.4" r="6.7"/><circle cx="582.2" cy="399.5" r="6.7"/><circle cx="576.6" cy="389.0" r="6.7"/></g>
<circle cx="586.6" cy="390.4" r="4.4" fill="#f8d21e" stroke="#c9a21a" stroke-width="0.8"/>
<g stroke="#4d6f9e" stroke-width="2" fill="#4d6f9e"><circle cx="560.4" cy="409.5" r="8.9"/><circle cx="559.4" cy="398.4" r="7.2"/><circle cx="570.6" cy="405.2" r="7.2"/><circle cx="567.7" cy="417.9" r="7.2"/><circle cx="554.7" cy="419.0" r="7.2"/><circle cx="549.6" cy="407.0" r="7.2"/></g>
<g fill="#8db4e4"><circle cx="560.4" cy="409.5" r="8.9"/><circle cx="559.4" cy="398.4" r="7.2"/><circle cx="570.6" cy="405.2" r="7.2"/><circle cx="567.7" cy="417.9" r="7.2"/><circle cx="554.7" cy="419.0" r="7.2"/><circle cx="549.6" cy="407.0" r="7.2"/></g>
<circle cx="560.4" cy="409.5" r="4.6" fill="#f8d21e" stroke="#c9a21a" stroke-width="0.8"/>
<g stroke="#4d6f9e" stroke-width="2" fill="#4d6f9e"><circle cx="514.7" cy="405.7" r="12.2"/><circle cx="510.5" cy="391.0" r="9.9"/><circle cx="527.4" cy="397.1" r="9.9"/><circle cx="526.8" cy="415.1" r="9.9"/><circle cx="509.5" cy="420.1" r="9.9"/><circle cx="499.4" cy="405.2" r="9.9"/></g>
<g fill="#8db4e4"><circle cx="514.7" cy="405.7" r="12.2"/><circle cx="510.5" cy="391.0" r="9.9"/><circle cx="527.4" cy="397.1" r="9.9"/><circle cx="526.8" cy="415.1" r="9.9"/><circle cx="509.5" cy="420.1" r="9.9"/><circle cx="499.4" cy="405.2" r="9.9"/></g>
<circle cx="514.7" cy="405.7" r="5.9" fill="#f8d21e" stroke="#c9a21a" stroke-width="0.8"/>
<path d="M473.4 437 L605.6 437 C604 455 602 468 601.7 476 C590 479 500 479 477.5 476 C476 465 474 450 473.4 437 Z" fill="#957bb5" stroke="#6b4a86" stroke-width="0.8"/>
<path d="M477.5 476 C500 479 590 479 601.7 476 C598 500 590 520 577 531 C560 535 520 535 503 531 C490 520 482 500 477.5 476 Z" fill="#7a3e8f" stroke="#5c2b6f" stroke-width="0.9"/>
<path d="M465 412.8 L614 412.4 C617.5 412.4 617.8 416 617.5 424 C617.3 432 617 436 612 436.5 C580 438.5 500 438.5 466 436.5 C462 436 461.8 430 461.7 424 C461.6 416 462 412.8 465 412.8 Z" fill="#7b3f91" stroke="#57296c" stroke-width="0.9"/>
<g stroke="#4d6f9e" stroke-width="2" fill="#4d6f9e"><circle cx="560.4" cy="409.5" r="8.9"/><circle cx="559.4" cy="398.4" r="7.2"/><circle cx="570.6" cy="405.2" r="7.2"/><circle cx="567.7" cy="417.9" r="7.2"/><circle cx="554.7" cy="419.0" r="7.2"/><circle cx="549.6" cy="407.0" r="7.2"/></g>
<g fill="#8db4e4"><circle cx="560.4" cy="409.5" r="8.9"/><circle cx="559.4" cy="398.4" r="7.2"/><circle cx="570.6" cy="405.2" r="7.2"/><circle cx="567.7" cy="417.9" r="7.2"/><circle cx="554.7" cy="419.0" r="7.2"/><circle cx="549.6" cy="407.0" r="7.2"/></g>
<circle cx="560.4" cy="409.5" r="4.6" fill="#f8d21e" stroke="#c9a21a" stroke-width="0.8"/>
<g stroke="#4d6f9e" stroke-width="2" fill="#4d6f9e"><circle cx="514.7" cy="405.7" r="12.2"/><circle cx="510.5" cy="391.0" r="9.9"/><circle cx="527.4" cy="397.1" r="9.9"/><circle cx="526.8" cy="415.1" r="9.9"/><circle cx="509.5" cy="420.1" r="9.9"/><circle cx="499.4" cy="405.2" r="9.9"/></g>
<g fill="#8db4e4"><circle cx="514.7" cy="405.7" r="12.2"/><circle cx="510.5" cy="391.0" r="9.9"/><circle cx="527.4" cy="397.1" r="9.9"/><circle cx="526.8" cy="415.1" r="9.9"/><circle cx="509.5" cy="420.1" r="9.9"/><circle cx="499.4" cy="405.2" r="9.9"/></g>
<circle cx="514.7" cy="405.7" r="5.9" fill="#f8d21e" stroke="#c9a21a" stroke-width="0.8"/>
<rect x="426.0" y="192.0" width="9" height="9" fill="#fff" stroke="#9a9a9a" stroke-width="1.1"/>
<rect x="642.0" y="192.0" width="9" height="9" fill="#fff" stroke="#9a9a9a" stroke-width="1.1"/>
<rect x="426.0" y="529.0" width="9" height="9" fill="#fff" stroke="#9a9a9a" stroke-width="1.1"/>
<rect x="642.0" y="529.0" width="9" height="9" fill="#fff" stroke="#9a9a9a" stroke-width="1.1"/>
</svg>
<div class="a" style="left:498.5px;top:167px;width:79.5px;height:16.2px;background:#1e1e1e;border-radius:2px"></div>
<div class="t" style="left:508px;top:170.2px;font-size:10px;letter-spacing:-0.3px;font-weight:bold;color:#f4f4f4">3.85&nbsp; in x 6&nbsp; in</div>
<!-- zoom widget -->
<div class="a" style="left:96px;top:797px;width:74px;height:25px;border-radius:12.5px;background:#f1f1f1;box-shadow:0 0 3px rgba(0,0,0,0.06)"></div>
<div class="t" style="left:114px;top:802.6px;font-size:15.2px;letter-spacing:1px;color:#c6c6c6">00%</div>
<svg style="left:0;top:0" width="200" height="841">
 <circle cx="160.8" cy="809.5" r="7.4" fill="none" stroke="#c8c8c8" stroke-width="1.3"/>
 <path d="M160.8 805.5V813.5M156.8 809.5H164.8" stroke="#c8c8c8" stroke-width="1.2"/>
 <ellipse cx="62.9" cy="789.3" rx="53.6" ry="42.5" fill="#fff"/>
 <ellipse cx="62.9" cy="789.3" rx="52.8" ry="41.7" fill="#c83c20"/>
 <path d="M85 786.4 Q95 783 106 785.5" fill="none" stroke="#fff" stroke-width="1.2"/>
 <path d="M64 797 Q70 790 78 792 Q90 796 101 791" fill="none" stroke="#fff" stroke-width="1.1"/>
 <path d="M45 790 Q50 786 55 789" fill="none" stroke="#fff" stroke-width="1"/>
</svg>
<div class="t" style="left:20px;top:763px;font-family:'Liberation Serif',serif;font-style:italic;font-size:29px;color:#fff">Craft</div>
<div class="t" style="left:84px;top:775.6px;font-family:'Liberation Serif',serif;font-weight:bold;font-size:7.8px;color:#fff">WITH</div>
<div class="t" style="left:28px;top:789.5px;font-family:'Liberation Serif',serif;font-style:italic;font-size:29px;color:#fff">Sarah</div>
<!-- cursor -->
<svg style="left:0;top:0" width="700" height="160">
 <path d="M665.4 120.3 L665.4 139.5 L670 135.6 L673.4 142.8 L676.2 141.4 L672.8 134.6 L680 134.3 Z" fill="#000" stroke="#fff" stroke-width="0.8" stroke-linejoin="round"/>
</svg>

</body></html>
